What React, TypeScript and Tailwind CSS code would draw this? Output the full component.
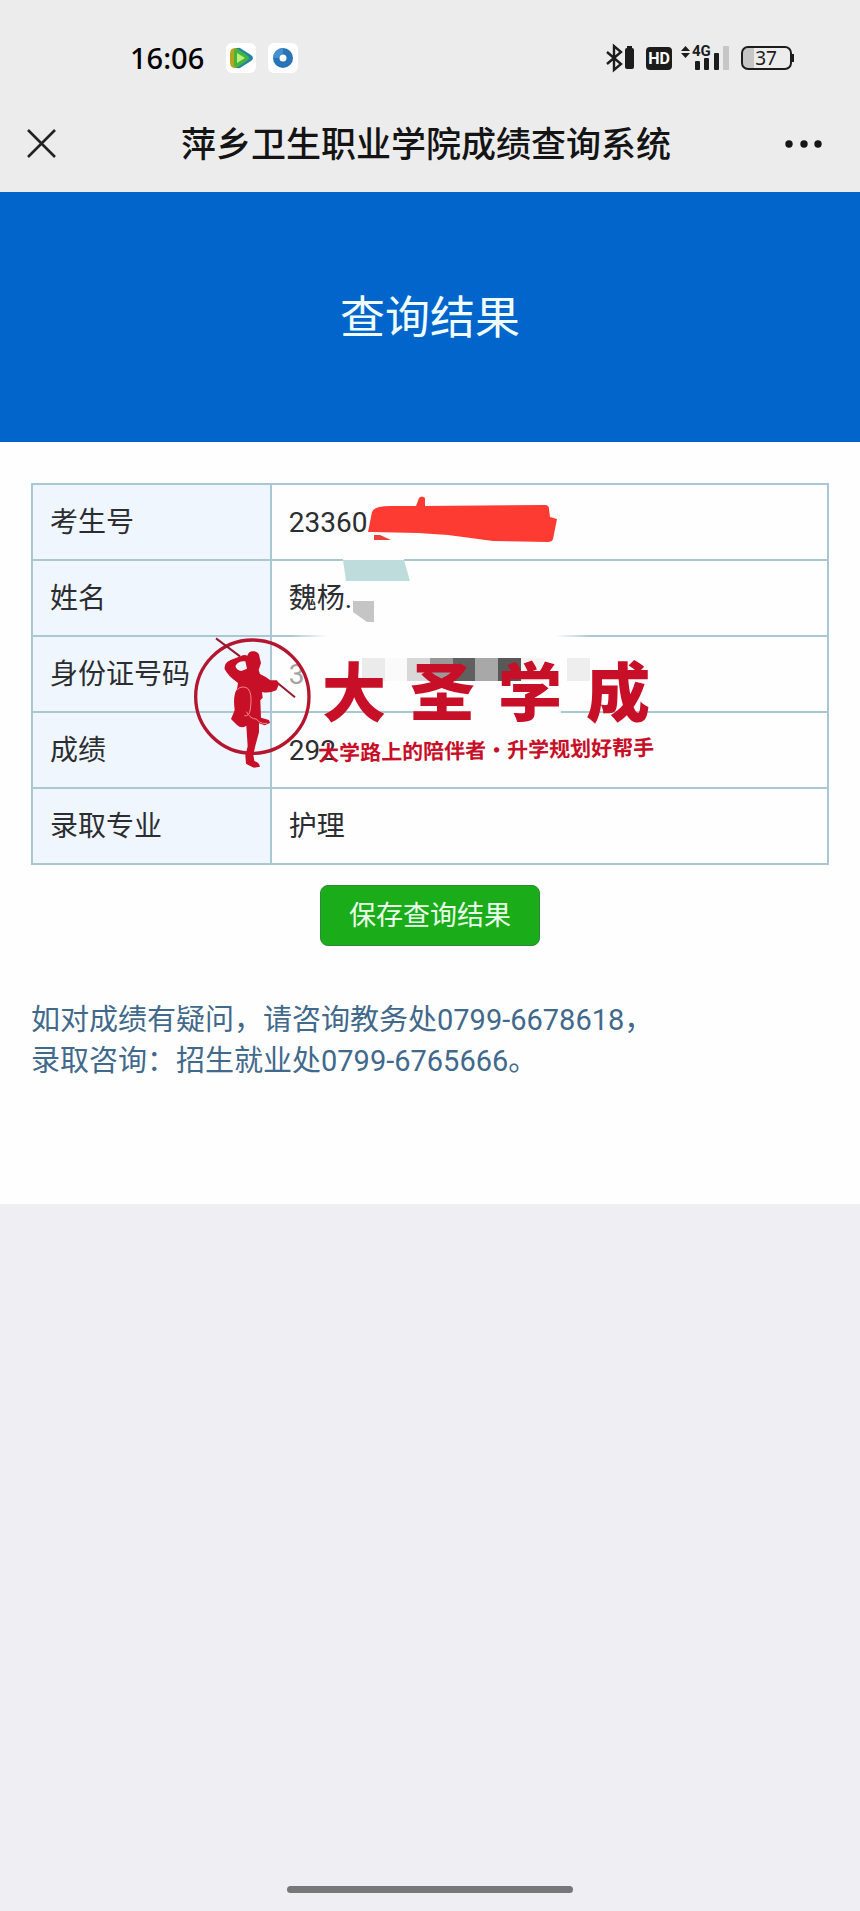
import React from "react";

const results = [
  { label: "考生号", value: "23360" },
  { label: "姓名", value: "魏杨." },
  { label: "身份证号码", value: "3", faded: true },
  { label: "成绩", value: "292" },
  { label: "录取专业", value: "护理" },
];

const mosaic = [
  { x: 331, fill: "#ebebeb" },
  { x: 354, fill: "#fafafa" },
  { x: 376, fill: "#d8d8d8" },
  { x: 399, fill: "#999999" },
  { x: 422, fill: "#606060" },
  { x: 444, fill: "#a8a8a8" },
  { x: 467, fill: "#585858" },
  { x: 490, fill: "#f4f4f4" },
  { x: 536, fill: "#eeeeee" },
];

const StatusBar: React.FC = () => (
  <div className="flex h-24 items-center justify-between pt-5 pr-[66px] pl-[130px]">
    <div className="flex items-center">
      <span className="w-24 font-['Noto_Sans',sans-serif] text-[29px] leading-9 font-medium text-black">16:06</span>
      <div className="flex gap-3">
        <svg className="size-[30px]" viewBox="0 0 30 30" aria-hidden="true">
          <rect width="30" height="30" rx="6" fill="#fff" />
          <path d="M4 11q0-6 5-6h4v20H9q-5 0-5-6Z" fill="#b9a21c" />
          <path d="M10 7q0-3 4-2l11 7q4 3 0 6l-11 7q-4 1-4-2Z" fill="#2384a5" />
          <path d="M8 8q0-3 4-2l10 7q2 2 0 4l-10 7q-4 1-4-2Z" fill="#45b43c" />
          <path d="M11 10v10l8-5Z" fill="#b9f07c" />
        </svg>
        <svg className="size-[30px]" viewBox="0 0 30 30" aria-hidden="true">
          <rect width="30" height="30" rx="6" fill="#fff" />
          <circle cx="15" cy="15" r="10" fill="#2874b8" />
          <path d="M5 15a10 10 0 0 1 10-10v5l-5 5Z" fill="#4390cc" />
          <circle cx="15" cy="15" r="3.500" fill="#fff" />
        </svg>
      </div>
    </div>

    <svg className="h-[30px] w-[190px]" viewBox="0 0 190 30" aria-hidden="true">
      {/* Bluetooth */}
      <path d="M3 9l14 12-7 6V3l7 6L3 21" fill="none" stroke="#1c1c1c" strokeWidth="2.4" />
      <rect x="21" y="5" width="9" height="21" rx="2" fill="#1c1c1c" />
      <rect x="23" y="3" width="5" height="3" fill="#1c1c1c" />

      {/* HD */}
      <rect x="42" y="4" width="26" height="23" rx="4" fill="#1c1c1c" />
      <text x="55" y="21" textAnchor="middle" fill="#fff" className="font-[Roboto,sans-serif] text-[16px] font-bold">HD</text>

      {/* Signal */}
      <path d="M77 8l4.500-5 4.500 5ZM77 10l4.500 5 4.500-5Z" fill="#1c1c1c" />
      <text x="88" y="13" fill="#1c1c1c" className="font-[Roboto,sans-serif] text-[15px] font-bold">4G</text>
      <rect x="91" y="18" width="5" height="9" rx="1" fill="#1c1c1c" />
      <rect x="100" y="15" width="5" height="12" rx="1" fill="#1c1c1c" />
      <rect x="110" y="10" width="5" height="17" rx="1" fill="#1c1c1c" />
      <rect x="119" y="3" width="6" height="24" rx="1" fill="#c6c6c6" />

      {/* Battery */}
      <path d="M143 5h7v20h-7q-4 0-4-4V9q0-4 4-4Z" fill="#c6c6c6" />
      <rect x="138" y="4" width="49" height="22" rx="6" fill="none" stroke="#1c1c1c" strokeWidth="2" />
      <rect x="188" y="11" width="2" height="8" fill="#1c1c1c" />
      <text x="162" y="22" textAnchor="middle" fill="#1c1c1c" className="font-['Noto_Sans',sans-serif] text-[19px]">37</text>
    </svg>
  </div>
);

const TitleBar: React.FC = () => (
  <div className="flex h-24 items-center justify-between px-6">
    <button type="button" aria-label="关闭" className="flex h-12 w-16 items-center">
      <svg className="size-9" viewBox="0 0 36 36" fill="none" stroke="#222" strokeWidth="2.6">
        <path d="M4 4l27 27M31 4L4 31" />
      </svg>
    </button>
    <h1 className="pt-1 pr-2 text-[35px] leading-12 font-medium text-[#141414]">萍乡卫生职业学院成绩查询系统</h1>
    <button type="button" aria-label="更多" className="flex h-12 w-16 items-center justify-center">
      <svg className="h-3 w-10" viewBox="0 0 40 12" fill="#161616">
        <circle cx="5" cy="6" r="3.700" />
        <circle cx="20" cy="6" r="3.700" />
        <circle cx="34" cy="6" r="3.700" />
      </svg>
    </button>
  </div>
);

const Redactions: React.FC = () => (
  <svg className="pointer-events-none absolute top-0 left-0 h-[380px] w-[800px]" viewBox="0 0 800 380" aria-hidden="true">
    <defs>
      <linearGradient id="fade">
        <stop offset="0" stopColor="#fefefe" stopOpacity="0" />
        <stop offset="0.12" stopColor="#fefefe" />
        <stop offset="0.88" stopColor="#fefefe" />
        <stop offset="1" stopColor="#fefefe" stopOpacity="0" />
      </linearGradient>
    </defs>
    <path d="M312 73h61v6h-61Z" fill="#fefefe" />
    <path d="M260 148h300v8H260ZM400 225h130v6H400Z" fill="url(#fade)" />
    <path
      d="M337 49l4-20q2-6 18-6h26l3-8q3-3 6 0v8l120-1q4 0 4 4l1 8 7 2-4 20q-1 3-5 3l-55-1-45-6-30-2-46-1Z"
      fill="#fe3b33"
    />
    <path d="M343 52h6l11 5h-17Z" fill="#ee3f3a" />
    <path d="M312 77h61l6 21h-64Z" fill="#bfdcdd" />
    <path d="M322 118h21v21h-7l-14-10Z" fill="#c5c5c5" />
    {mosaic.map((block) => (
      <rect key={block.x} x={block.x} y="175" width="23" height="23" fill={block.fill} />
    ))}
  </svg>
);

const Watermark: React.FC = () => (
  <div className="pointer-events-none absolute top-[152px] left-[161px] flex text-[#c80f28]">
    <svg className="h-[134px] w-[122px]" viewBox="36 48 366 402" fill="currentColor" aria-hidden="true">
      <circle cx="217" cy="233" r="170" fill="none" stroke="#b5152e" strokeWidth="10" />
      <path d="M108 58l72 54M290 190l55 45" fill="none" stroke="#98182e" strokeWidth="6" />
      <path d="M202 110Q207 94 223 97Q238 100 239 116L243 132L236 153L240 165Q260 174 271 184L291 184L297 196L289 214Q266 224 246 219L248 236L241 244L243 296L267 303L270 312L254 319L237 313L237 340L226 380L220 407L223 426Q239 431 240 443L222 446Q205 439 198 434L196 410L203 382L199 320Q184 330 171 318L153 300L161 281L164 273Q158 229 171 211L174 192Q143 170 134 150Q131 133 152 123L181 112Q194 105 202 110ZM166 141Q170 154 184 156L201 149L196 127Q174 125 166 141Z" fillRule="evenodd" />
      <path d="M172 212Q184 198 203 208Q218 222 211 270Q208 294 193 290M199 278Q212 301 229 300Q240 316 262 313" fill="none" stroke="#ef8991" strokeWidth="3" />
    </svg>
    <div className="pt-5 pl-1">
      <p className="flex gap-6 pl-1 font-['Noto_Sans_CJK_SC',sans-serif] text-[64px] leading-[66px] font-black">
        <span>大</span>
        <span>圣</span>
        <span>学</span>
        <span>成</span>
      </p>
      <p className="-rotate-1 pt-4 font-['Noto_Sans_CJK_SC',serif] text-[21px] leading-6 font-bold whitespace-nowrap">
        大学路上的陪伴者·升学规划好帮手
      </p>
    </div>
  </div>
);

const App: React.FC = () => {
  return (
    <div className="flex min-h-screen flex-col bg-[#efeff3] font-[Roboto,'Noto_Sans_CJK_SC',sans-serif]">
      <header className="bg-[#ececec]">
        <StatusBar />
        <TitleBar />
      </header>

      <main className="bg-[#fefefe]">
        <div className="flex h-[250px] items-center justify-center bg-[#0265cb] pt-1">
          <h2 className="text-[45px] leading-16 text-[#effffe]">查询结果</h2>
        </div>

        <div className="px-[31px] pt-[41px] pb-[122px]">
          <div className="relative">
            <table className="w-full table-fixed border-collapse text-[28px] leading-10 text-[#2b2d31]">
              <tbody>
                {results.map((row) => (
                  <tr key={row.label} className="h-[76px]">
                    <th scope="row" className="w-[30%] border-2 border-[#a9c8d3] bg-[#eff6fe] px-[17px] pt-0.5 text-left font-normal whitespace-nowrap">
                      {row.label}
                    </th>
                    <td className="border-2 border-[#a9c8d3] px-[17px] pt-0.5">
                      <span className={row.faded ? "text-[#a5a5a5]" : ""}>{row.value}</span>
                    </td>
                  </tr>
                ))}
              </tbody>
            </table>
            <Redactions />
            <Watermark />
          </div>

          <div className="flex justify-center pt-5">
            <button type="button" className="h-[61px] rounded-lg border border-[#2a8a35] bg-[#1aad19] px-7 text-[27px] leading-10 text-[#eaffea]">
              保存查询结果
            </button>
          </div>

          <p className="pt-[54px] text-[29px] leading-[41px] text-[#41698c]">
            如对成绩有疑问，请咨询教务处0799-6678618，
            <br />
            录取咨询：招生就业处0799-6765666。
          </p>
        </div>
      </main>

      <div className="mt-auto flex justify-center pb-[18px]">
        <div className="h-[7px] w-1/3 rounded-full bg-[#77777a]" />
      </div>
    </div>
  );
};

export default App;
